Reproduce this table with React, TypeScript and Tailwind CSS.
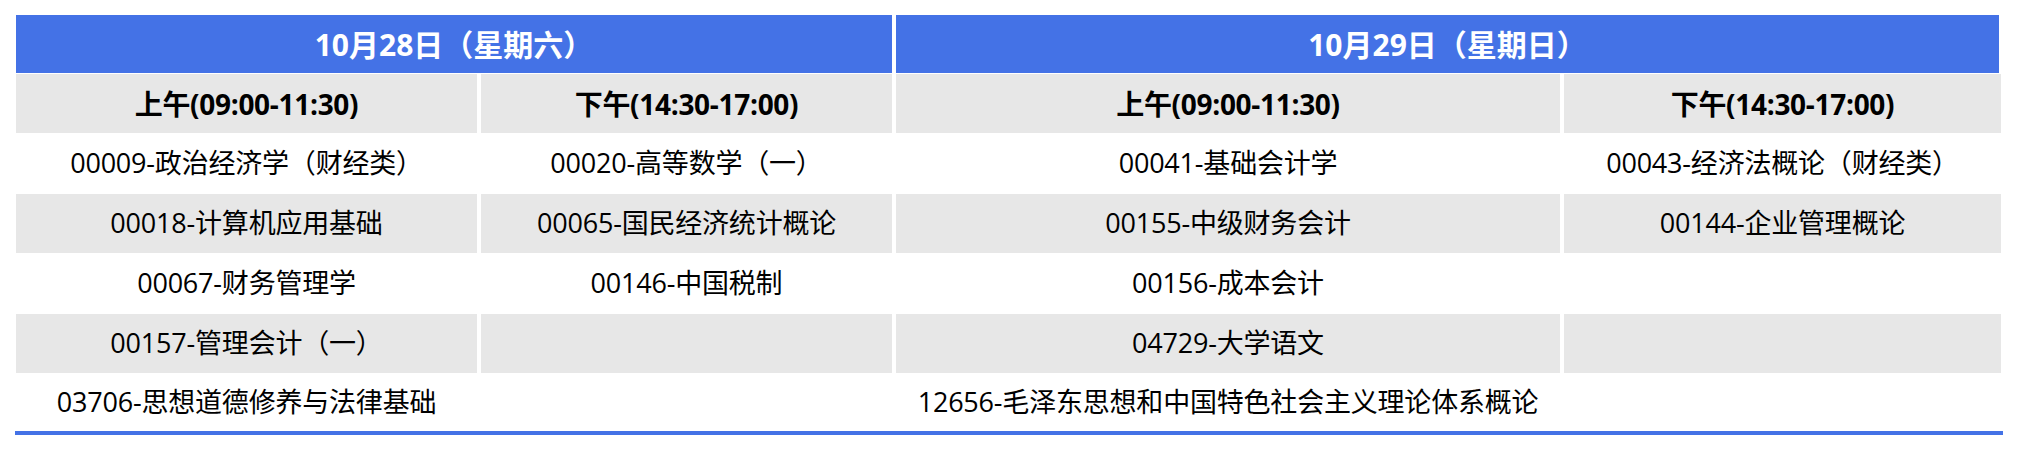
import React from "react";

const font = "font-['Open_Sans','Noto_Sans_CJK_SC',sans-serif]";

type Row = { cells: string[]; gray: boolean; h: string };

const rows: Row[] = [
  { cells: ["00009-政治经济学（财经类）", "00020-高等数学（一）", "00041-基础会计学", "00043-经济法概论（财经类）"], gray: false, h: "h-[60px]" },
  { cells: ["00018-计算机应用基础", "00065-国民经济统计概论", "00155-中级财务会计", "00144-企业管理概论"], gray: true, h: "h-[60px]" },
  { cells: ["00067-财务管理学", "00146-中国税制", "00156-成本会计", ""], gray: false, h: "h-[60px]" },
  { cells: ["00157-管理会计（一）", "", "04729-大学语文", ""], gray: true, h: "h-[60px]" },
  { cells: ["03706-思想道德修养与法律基础", "", "12656-毛泽东思想和中国特色社会主义理论体系概论", ""], gray: false, h: "h-[58px]" },
];

export default function App() {
  return (
    <div className={`w-[2018px] h-[450px] bg-white pt-[15px] pl-[15px] ${font}`}>
      <div className="ml-[1px] w-[1985px] grid grid-cols-[461px_411px_664px_437px] gap-x-[4px]">
        <div className="col-span-2 h-[58px] bg-[#4472e6] flex items-center justify-center text-white font-bold text-[30px]">
          10月28日（星期六）
        </div>
        <div className="col-span-2 h-[58px] mr-[2px] bg-[#4472e6] flex items-center justify-center text-white font-bold text-[30px]">
          10月29日（星期日）
        </div>
        {["上午(09:00-11:30)", "下午(14:30-17:00)", "上午(09:00-11:30)", "下午(14:30-17:00)"].map((t, i) => (
          <div key={i} className="h-[60px] pt-[1px] flex">
            <div className="flex-1 bg-[#e7e7e7] flex items-center justify-center font-bold text-[28px] text-black tracking-[-0.3px]">
              {t}
            </div>
          </div>
        ))}
        {rows.map((r, ri) =>
          r.cells.map((c, ci) => (
            <div key={`${ri}-${ci}`} className={`${r.h} flex ${r.gray ? "py-[0.5px]" : ""}`}>
              <div
                className={`flex-1 flex items-center justify-center whitespace-nowrap text-[27px] tracking-[-0.2px] text-black ${
                  r.gray ? "bg-[#e7e7e7]" : "bg-white"
                }`}
              >
                {c}
              </div>
            </div>
          ))
        )}
      </div>
      <div className="w-[1988px] h-[4px] bg-[#4472e6]" />
    </div>
  );
}
